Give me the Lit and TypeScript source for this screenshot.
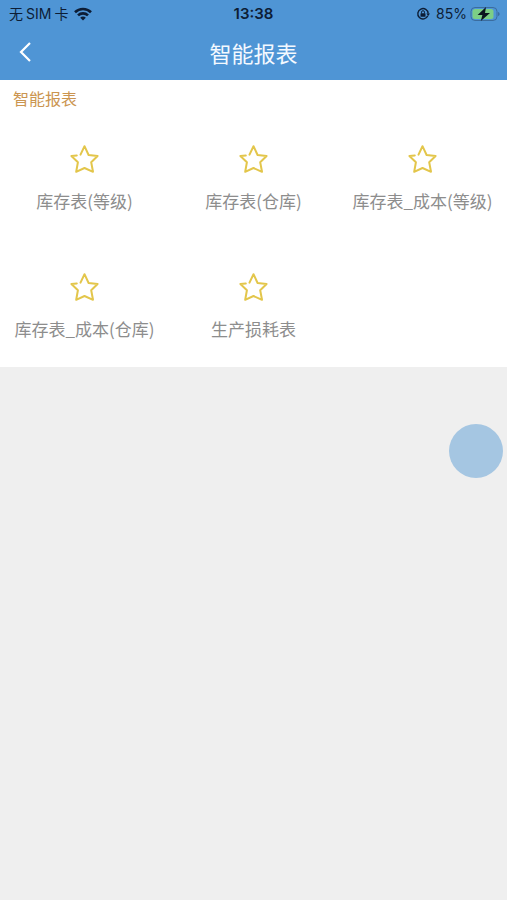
import { LitElement, html, css } from "lit";
import { customElement, state } from "lit/decorators.js";

const REPORTS = [
  "库存表(等级)",
  "库存表(仓库)",
  "库存表_成本(等级)",
  "库存表_成本(仓库)",
  "生产损耗表",
];

@customElement("status-bar")
class StatusBar extends LitElement {
  static styles = css`
    :host {
      display: grid;
      grid-template-columns: 1fr auto 1fr;
      align-items: center;
      height: 26px;
      padding: 1px 7px 0;
      color: #0d1d35;
      font: 14px/26px Inter, "Noto Sans CJK SC", sans-serif;
    }
    .side {
      display: flex;
      align-items: center;
    }
    .carrier {
      gap: 3px;
      padding-left: 2px;
    }
    .wifi {
      margin-left: 3px;
    }
    .time {
      font-weight: 600;
      font-size: 15px;
    }
    .power {
      justify-content: flex-end;
      gap: 3px;
    }
    .lock {
      margin-right: 3px;
    }
    svg {
      display: block;
    }
  `;

  render() {
    return html`
      <div class="side carrier">
        <span>无</span><span>SIM</span><span>卡</span>
        <svg class="wifi" width="18" height="14" viewBox="0 0 18 14" fill="none" stroke="currentColor" stroke-width="2.6">
          <path d="M1 5.2C5.4.9 12.6.9 17 5.2" />
          <path d="M4 8.4c2.8-2.7 7.2-2.7 10 0" />
          <path d="M6.2 10.7c1.6-1.5 4-1.5 5.6 0L9 13.6z" fill="currentColor" stroke="none" />
        </svg>
      </div>
      <span class="time">13:38</span>
      <div class="side power">
        <svg class="lock" width="14" height="14" viewBox="0 0 14 14" fill="none" stroke="currentColor">
          <path d="M11.8 8.8A5.2 5.2 0 1 1 12.2 6.6" stroke-width="1.4" />
          <path d="M10.4 6.4h3.6l-1.8 2.6z" fill="currentColor" stroke="none" />
          <rect x="4.5" y="6.2" width="5" height="3.6" rx=".6" fill="currentColor" stroke="none" />
          <path d="M5.5 6.4V5.2a1.5 1.5 0 0 1 3 0v1.2" />
        </svg>
        <span>85%</span>
        <svg width="30" height="16" viewBox="0 0 30 16">
          <rect x="1" y="1.5" width="26" height="13" rx="4" fill="none" stroke="#3b6c9e" />
          <rect x="2.500" y="3" width="21" height="10" rx="2.500" fill="#7cce86" />
          <path d="M28 6v4c1-.3 1.600-1.100 1.600-2s-.6-1.700-1.600-2z" fill="#3b6c9e" />
          <path d="M16 1 7.600 9h4.800l-1.600 6L20 7h-5z" fill="#0b1420" />
        </svg>
      </div>
    `;
  }
}

@customElement("report-tile")
class ReportTile extends LitElement {
  static properties = { label: { type: String } };
  declare label: string;

  static styles = css`
    :host {
      display: block;
    }
    .tile {
      display: flex;
      flex-direction: column;
      align-items: center;
      gap: 14px;
      width: 100%;
      padding: 33px 0 26px;
      border: 0;
      background: none;
      color: #8d8d8d;
      font: 17px/24px "Noto Sans CJK SC", sans-serif;
      white-space: nowrap;
      cursor: pointer;
    }
    .star {
      display: block;
    }
  `;

  render() {
    return html`
      <button class="tile" type="button">
        <svg class="star" width="31" height="31" viewBox="0 0 31 31" fill="none" stroke="#e3c64b" stroke-width="2" stroke-linejoin="round" stroke-linecap="round">
          <path d="M11.500 10.600 15.500 2.200 19.600 11 28.600 12 22.200 18.300 24 27.800 15.500 24 7.200 27.800 8.900 18.300 2.400 12 7.800 11.400" />
        </svg>
        <span>${this.label}</span>
      </button>
    `;
  }
}

@customElement("app-root")
class AppRoot extends LitElement {
  @state() private reports = REPORTS;

  static styles = css`
    :host {
      display: block;
      position: relative;
      min-height: 100vh;
      background: #efefef;
      font-family: "Noto Sans CJK SC", sans-serif;
    }
    .top {
      padding-bottom: 3px;
      background: #4f95d5;
    }
    .nav {
      display: grid;
      grid-template-columns: 48px 1fr 48px;
      align-items: center;
      height: 50px;
    }
    .back {
      display: flex;
      align-items: center;
      height: 48px;
      padding: 0 0 0 17px;
      border: 0;
      background: none;
      cursor: pointer;
    }
    .title {
      margin: 0;
      color: #f4f9ff;
      font-size: 22px;
      line-height: 32px;
      font-weight: 400;
      text-align: center;
    }
    .panel {
      background: #fff;
    }
    .heading {
      margin: 0;
      padding: 6px 13px 1px;
      color: #cb9550;
      font-size: 16px;
      line-height: 24px;
      font-weight: 400;
    }
    .grid {
      display: grid;
      grid-template-columns: repeat(3, 1fr);
    }
    .float {
      position: absolute;
      top: 424px;
      right: 4px;
      width: 54px;
      height: 54px;
      padding: 0;
      border: 0;
      border-radius: 50%;
      background: #a5c6e2;
      cursor: pointer;
    }
  `;

  render() {
    return html`
      <header class="top">
        <status-bar></status-bar>
        <div class="nav">
          <button class="back" type="button" aria-label="返回">
            <svg width="16" height="22" viewBox="0 0 16 22" fill="none" stroke="#fff" stroke-width="2.200">
              <path d="M13 2 4 11l9 9" />
            </svg>
          </button>
          <h1 class="title">智能报表</h1>
        </div>
      </header>
      <main class="panel">
        <h2 class="heading">智能报表</h2>
        <div class="grid">
          ${this.reports.map((name) => html`<report-tile .label=${name}></report-tile>`)}
        </div>
      </main>
      <button class="float" type="button" aria-label="快捷菜单"></button>
    `;
  }
}
